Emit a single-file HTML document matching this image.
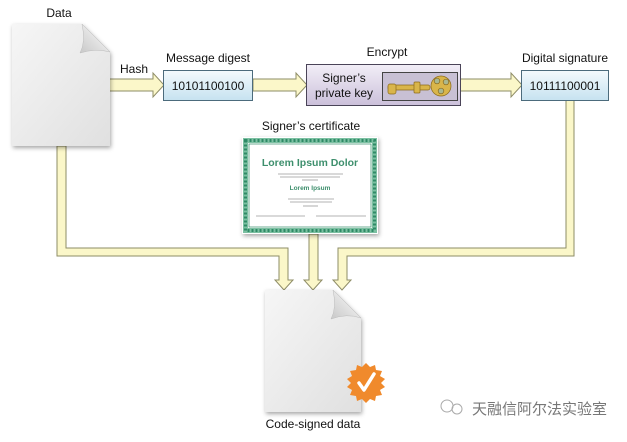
<!DOCTYPE html>
<html><head><meta charset="utf-8"><style>
body{margin:0;background:#fff;width:627px;height:437px;overflow:hidden;font-family:"Liberation Sans",sans-serif}
</style></head><body>
<svg width="627" height="437" viewBox="0 0 627 437" xmlns="http://www.w3.org/2000/svg" font-family="Liberation Sans, sans-serif">
<defs>
<linearGradient id="doc" x1="0" y1="0" x2="1" y2="1"><stop offset="0" stop-color="#f6f6f6"/><stop offset="1" stop-color="#e0e0e0"/></linearGradient>
<linearGradient id="blue" x1="0" y1="0" x2="0" y2="1"><stop offset="0" stop-color="#f4fafd"/><stop offset="1" stop-color="#c6e2f0"/></linearGradient>
<linearGradient id="purp" x1="0" y1="0" x2="0" y2="1"><stop offset="0" stop-color="#f2eef7"/><stop offset="1" stop-color="#cbc0da"/></linearGradient>
<linearGradient id="fold" x1="0" y1="1" x2="1" y2="0"><stop offset="0" stop-color="#c8c8c8"/><stop offset="1" stop-color="#ffffff"/></linearGradient>
<filter id="sh" x="-20%" y="-20%" width="140%" height="140%"><feDropShadow dx="1" dy="2" stdDeviation="2" flood-opacity="0.35"/></filter>
</defs>
<g fill="#fbf7c9" stroke="#8e8c66" stroke-width="1">
<path d="M108 79 H153 V73 L164 85 L153 97 V91 H108 Z"/>
<path d="M253 79 H296 V73 L307 85 L296 97 V91 H253 Z"/>
<path d="M460 79 H511 V73 L522 85 L511 97 V91 H460 Z"/>
<path d="M57 146 H66 V248 H288 V280 H293 L284 290 L275 280 H279 V256 H57 Z"/>
<path d="M309 234 H318 V280 H322 L313 290 L304 280 H309 Z"/>
<path d="M566 100 H574 V256 H347 V280 H351 L342 290 L333 280 H338 V248 H566 Z"/>
</g>
<g filter="url(#sh)"><path d="M12 24 H82 L110 52 V146 H12 Z" fill="url(#doc)"/></g>
<path d="M82 24 Q86 42 80 53 Q96 48 110 52 Z" fill="url(#fold)" stroke="#bbb" stroke-width="0.5"/>
<text x="59" y="17" font-size="12" text-anchor="middle" fill="#111">Data</text>
<text x="134" y="73" font-size="12" text-anchor="middle" fill="#111">Hash</text>
<text x="208" y="62" font-size="12" text-anchor="middle" fill="#111">Message digest</text>
<rect x="163.5" y="70.5" width="89" height="30" fill="url(#blue)" stroke="#4c6b7c"/>
<text x="208" y="90" font-size="12" text-anchor="middle" fill="#111">10101100100</text>
<text x="387" y="56" font-size="12" text-anchor="middle" fill="#111">Encrypt</text>
<rect x="306.5" y="64.5" width="154" height="41" fill="url(#purp)" stroke="#4a4458"/>
<text x="344" y="82" font-size="12" text-anchor="middle" fill="#111">Signer’s</text>
<text x="344" y="97" font-size="12" text-anchor="middle" fill="#111">private key</text>
<rect x="382.5" y="72.5" width="75" height="28" fill="#c8c0d4" stroke="#444"/>
<g fill="#d9b54a" stroke="#8a6a1c" stroke-width="0.7">
<rect x="388" y="85" width="42" height="5" rx="2"/>
<rect x="388" y="84" width="8" height="10" rx="2"/>
<rect x="414" y="82" width="6" height="11" rx="1"/>
<circle cx="441" cy="86" r="10"/>
<circle cx="437" cy="81" r="2.8" fill="#a9b890"/><circle cx="446" cy="82" r="2.8" fill="#a9b890"/><circle cx="441" cy="91" r="2.8" fill="#a9b890"/>
</g>
<text x="565" y="62" font-size="12" text-anchor="middle" fill="#111">Digital signature</text>
<rect x="521.5" y="70.5" width="87" height="30" fill="url(#blue)" stroke="#4c6b7c"/>
<text x="565" y="90" font-size="12" text-anchor="middle" fill="#111">10111100001</text>
<text x="311" y="130" font-size="12" text-anchor="middle" fill="#111">Signer’s certificate</text>
<g filter="url(#sh)"><rect x="242" y="137" width="136" height="97" fill="#fff"/></g>
<rect x="245.5" y="140.5" width="129" height="90" fill="none" stroke="#7cc0a2" stroke-width="5"/>
<rect x="245.5" y="140.5" width="129" height="90" fill="none" stroke="#2e8a66" stroke-width="3" stroke-dasharray="2 2"/>
<rect x="249" y="144" width="122" height="83" fill="none" stroke="#2f8a66" stroke-width="0.7"/>
<text x="310" y="166" font-size="10.5" font-weight="bold" text-anchor="middle" fill="#3e8f6d">Lorem Ipsum Dolor</text>
<g stroke="#9a9a9a" stroke-width="0.8"><line x1="278" y1="174" x2="343" y2="174"/><line x1="280" y1="177" x2="340" y2="177"/><line x1="302" y1="180" x2="318" y2="180"/>
<line x1="288" y1="199" x2="334" y2="199"/><line x1="290" y1="202" x2="332" y2="202"/><line x1="303" y1="206" x2="318" y2="206"/>
<line x1="256" y1="216" x2="305" y2="216"/><line x1="316" y1="216" x2="366" y2="216"/></g>
<text x="310" y="190" font-size="6.5" font-weight="bold" text-anchor="middle" fill="#3e8f6d">Lorem Ipsum</text>
<g filter="url(#sh)"><path d="M265 290 H333 L361 318 V412 H265 Z" fill="url(#doc)"/></g>
<path d="M333 290 Q337 308 331 319 Q347 313 361 318 Z" fill="url(#fold)" stroke="#bbb" stroke-width="0.5"/>
<g transform="translate(366 383)">
<polygon fill="#f08a2c" points="0,-20 4,-16 9,-18 10,-13 16,-12 14,-7 19,-4 15,0 19,4 14,7 16,12 10,13 9,18 4,16 0,20 -4,16 -9,18 -10,13 -16,12 -14,7 -19,4 -15,0 -19,-4 -14,-7 -16,-12 -10,-13 -9,-18 -4,-16"/>
<path d="M-7 0 L-2 7 L8 -9" fill="none" stroke="#fff" stroke-width="3.5" stroke-linecap="round" stroke-linejoin="round"/>
</g>
<text x="313" y="428" font-size="12" text-anchor="middle" fill="#111">Code-signed data</text>
<g fill="none" stroke="#aaa" stroke-width="1"><circle cx="447" cy="406" r="6"/><circle cx="457" cy="409" r="5"/></g>
<text x="472" y="414" font-size="15" fill="#777" font-family="Liberation Sans, Noto Sans CJK SC, sans-serif">天融信阿尔法实验室</text>
</svg>
</body></html>
